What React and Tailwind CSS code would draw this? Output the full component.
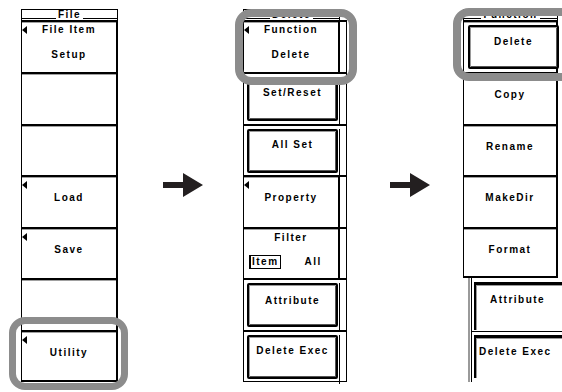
import React from "react"

const font = "font-['Liberation_Sans',Arial,sans-serif] font-bold text-[10px] leading-[10px] tracking-[1.5px] text-black"

function Tri() {
    return <div className="absolute left-0 top-[4px] h-0 w-0 border-y-[4px] border-r-[5px] border-y-transparent border-r-black" />
}

function Header({ label }) {
    return (
        <div className="flex h-[11px] items-end border-x border-t border-black bg-white">
            <div className="mb-[1px] h-px flex-1 bg-black" />
            <span className={`${font} px-[2px]`}>{label}</span>
            <div className="mb-[1px] h-px flex-1 bg-black" />
        </div>
    )
}

function Key({ h, label, sub, tri, last }) {
    return (
        <div
            className={`relative ${h} border-l border-r-2 border-t-2 border-black bg-white shadow-[inset_0_1px_0_#a0a0a0] ${last ? "border-b-2" : ""}`}
        >
            {tri && <Tri />}
            {sub ? (
                <div className={`${font} flex flex-col items-center pt-[3px]`}>
                    <span>{sub}</span>
                    <span className="mt-[15px]">{label}</span>
                </div>
            ) : (
                label && <div className={`${font} pt-[16px] text-center`}>{label}</div>
            )}
        </div>
    )
}

function Box({ label, className = "" }) {
    return (
        <div
            className={`ml-[3px] h-[44px] w-[91px] rounded-[2px] border-2 border-black bg-white text-center shadow-[inset_1px_1px_0_#9a9a9a,inset_-1px_-1px_0_#555] ${font} ${className}`}
        >
            {label}
        </div>
    )
}

function Arrow() {
    return (
        <svg width="40" height="24" viewBox="0 0 40 24" className="shrink-0">
            <path d="M0 9h20V0l20 12-20 12v-9H0z" fill="#231f20" />
        </svg>
    )
}

function FileColumn() {
    return (
        <div className="flex w-[97px] flex-col">
            <Header label="File" />
            <Key h="h-[52px]" sub="File Item" label="Setup" tri />
            <Key h="h-[52px]" />
            <Key h="h-[51px]" />
            <Key h="h-[52px]" label="Load" tri />
            <Key h="h-[51px]" label="Save" tri />
            <Key h="h-[52px]" />
            <Key h="h-[52px]" label="Utility" tri last />
        </div>
    )
}

function Slot({ h, children, last }) {
    return (
        <div className={`${h} border-x border-t-2 border-black bg-white ${last ? "border-b" : ""}`}>{children}</div>
    )
}

function DeleteColumn() {
    return (
        <div className="flex w-[104px] flex-col">
            <div className="w-[97px]">
                <Header label="Delete" />
            </div>
            <Slot h="h-[52px]">
                <div className="relative h-full w-[96px] border-r-2 border-black shadow-[inset_0_1px_0_#a0a0a0]">
                    <Tri />
                    <div className={`${font} flex flex-col items-center pt-[3px]`}>
                        <span>Function</span>
                        <span className="mt-[15px]">Delete</span>
                    </div>
                </div>
            </Slot>
            <Slot h="h-[52px]">
                <div className="h-full w-[96px] border-r border-black">
                    <Box label="Set/Reset" className="mt-[3px] pt-[9px]" />
                </div>
            </Slot>
            <Slot h="h-[51px]">
                <div className="h-full w-[96px] border-r border-black">
                    <Box label="All Set" className="mt-[3px] pt-[9px]" />
                </div>
            </Slot>
            <Slot h="h-[52px]">
                <div className="relative h-full w-[96px] border-r-2 border-black shadow-[inset_0_1px_0_#a0a0a0]">
                    <Tri />
                    <div className={`${font} pt-[16px] text-center`}>Property</div>
                </div>
            </Slot>
            <Slot h="h-[51px]">
                <div className="h-full w-[96px] border-r-2 border-black pt-[4px] shadow-[inset_0_1px_0_#a0a0a0]">
                    <div className={`${font} text-center`}>Filter</div>
                    <div className="mt-[12px] flex items-center pl-[5px]">
                        <span className={`${font} border border-l-2 border-black px-[1px] py-[1px]`}>Item</span>
                        <span className={`${font} ml-[24px]`}>All</span>
                    </div>
                </div>
            </Slot>
            <Slot h="h-[52px]">
                <div className="h-full w-[96px] border-r border-black">
                    <Box label="Attribute" className="mt-[3px] pt-[11px]" />
                </div>
            </Slot>
            <Slot h="h-[52px]" last>
                <div className="h-full w-[96px] border-r border-black">
                    <Box label="Delete Exec" className="mt-[3px] pt-[9px]" />
                </div>
            </Slot>
        </div>
    )
}

function FunctionColumn() {
    return (
        <div className="flex w-[99px] flex-col">
            <div className="w-[95px]">
                <Header label="Function" />
            </div>
            <div className="h-[52px] w-[95px] border-l border-r-2 border-t-2 border-black bg-white pl-[1px] shadow-[inset_0_1px_0_#a0a0a0]">
                <Box label="Delete" className="ml-0 mt-[3px] w-[91px] pt-[10px]" />
            </div>
            <Key h="h-[52px] w-[95px]" label="Copy" />
            <Key h="h-[51px] w-[95px]" label="Rename" />
            <Key h="h-[52px] w-[95px]" label="MakeDir" />
            <Key h="h-[51px] w-[95px]" label="Format" last />
            <div className="ml-[5px] h-[104px] border-l-2 border-[#9a9a9a] pl-px">
                <div className="flex h-full flex-col border-l border-black bg-white">
                    <div className="h-[54px] border-b border-black pl-[2px] pt-[4px]">
                        <div className={`h-[48px] border-l-2 border-t-[3px] border-black pl-[14px] pt-[10px] shadow-[inset_1px_1px_0_#9a9a9a] ${font}`}>
                            Attribute
                        </div>
                    </div>
                    <div className="h-[50px] pl-[2px] pt-[3px]">
                        <div className={`h-[43px] border-l-2 border-t-[3px] border-black pl-[3px] pt-[9px] shadow-[inset_1px_1px_0_#9a9a9a] ${font}`}>
                            Delete Exec
                        </div>
                    </div>
                </div>
            </div>
        </div>
    )
}

export default function App() {
    return (
        <div className="relative h-[392px] w-[562px] overflow-hidden bg-white">
            <div className="flex items-start pl-[21px] pt-[9px]">
                <FileColumn />
                <div className="ml-[45px] mt-[164px]">
                    <Arrow />
                </div>
                <div className="ml-[40px]">
                    <DeleteColumn />
                </div>
                <div className="ml-[43px] mt-[164px]">
                    <Arrow />
                </div>
                <div className="ml-[33px]">
                    <FunctionColumn />
                </div>
            </div>

            {/* highlight rings */}
            <div className="absolute left-[9px] top-[317px] h-[73px] w-[119px] rounded-[16px] border-[7px] border-[#8c8c8c]" />
            <div className="absolute left-[235px] top-[9px] h-[76px] w-[122px] rounded-[16px] border-[8px] border-[#8c8c8c]" />
            <div className="absolute left-[453px] top-[8px] h-[73px] w-[130px] rounded-[16px] border-[8px] border-[#8c8c8c]" />
        </div>
    )
}
